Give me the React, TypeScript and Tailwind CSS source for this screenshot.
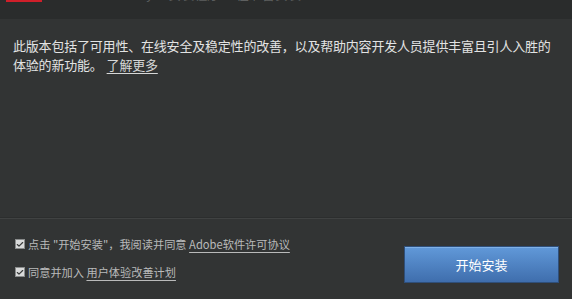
import { Check } from "lucide-react";

const font = { fontFamily: '"Microsoft YaHei", "Noto Sans CJK SC", "Noto Sans", sans-serif' };

function Box() {
  return (
    <span className="flex h-[10px] w-[10px] items-center justify-center border border-[#8a8c8c] bg-[#d9dada]">
      <Check size={9} strokeWidth={3.5} className="text-[#3a3c3c]" />
    </span>
  );
}

export default function App() {
  return (
    <div className="flex h-[299px] w-[572px] flex-col overflow-hidden bg-[#323434]" style={font}>
      {/* title bar, mostly cut off */}
      <div className="relative h-[19px] shrink-0 overflow-hidden bg-[#2a2c2c]">
        <div className="ml-[6px] h-[2px] w-[36px] bg-[#cf1f2a]" />
        <div className="absolute left-[50px] top-[-15px] text-[13px] leading-[18px] text-[#5e6060]">
          Adobe Flash Player 安装程序 正在准备安装
        </div>
      </div>

      {/* body text */}
      <div className="flex-1 px-[13px] pt-[17px]">
        <p className="text-[13px] leading-[19px] tracking-[-0.2px] text-[#e2e3e3]">
          此版本包括了可用性、在线安全及稳定性的改善，以及帮助内容开发人员提供丰富且引人入胜的体验的新功能。
          <a className="ml-[4px] text-[#d6d7d7] underline underline-offset-[3px]">了解更多</a>
        </p>
      </div>

      {/* footer */}
      <div className="h-[81px] shrink-0 border-t border-t-[#404242] shadow-[0_-1px_0_#2c2e2e]">
        <div className="flex items-start justify-between pl-[15px] pr-[13px]">
          <div className="flex flex-col gap-[12px] pt-[17px] text-[11.2px] leading-[16px] text-[#b9baba]">
            <label className="flex items-center gap-[3px]">
              <Box />
              <span>
                点击 "开始安装"，我阅读并同意{" "}
                <span className="underline underline-offset-[3px]">Adobe软件许可协议</span>
              </span>
            </label>
            <label className="flex items-center gap-[3px]">
              <Box />
              <span>
                同意并加入 <span className="underline underline-offset-[3px]">用户体验改善计划</span>
              </span>
            </label>
          </div>
          <button className="mt-[27px] flex h-[37px] w-[155px] items-center justify-center border border-[#2f4f7a] bg-gradient-to-b from-[#6199d9] to-[#3f6ead] text-[13px] text-white shadow-[inset_0_1px_0_#7fb0e6]">
            开始安装
          </button>
        </div>
      </div>
    </div>
  );
}
